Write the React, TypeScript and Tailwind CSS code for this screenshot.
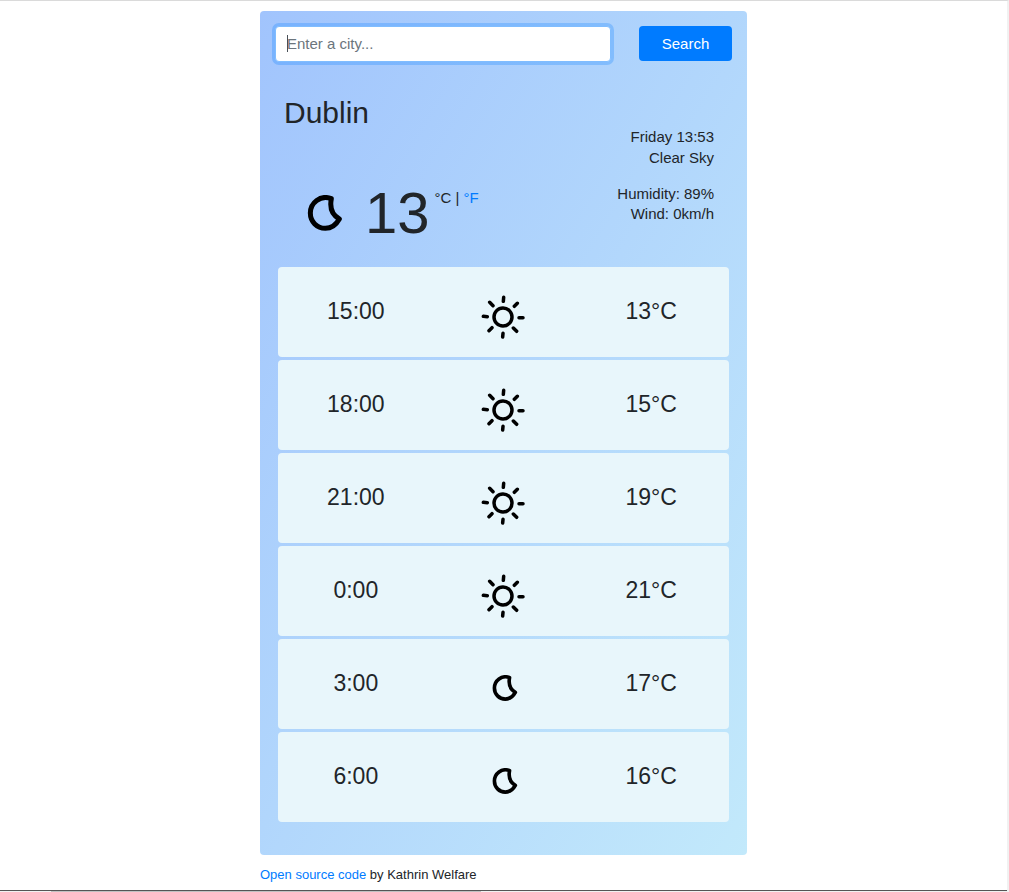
import { useState } from "react";

type Sky = "sun" | "moon";

const forecast: { time: string; sky: Sky; temperature: string }[] = [
  { time: "15:00", sky: "sun", temperature: "13°C" },
  { time: "18:00", sky: "sun", temperature: "15°C" },
  { time: "21:00", sky: "sun", temperature: "19°C" },
  { time: "0:00", sky: "sun", temperature: "21°C" },
  { time: "3:00", sky: "moon", temperature: "17°C" },
  { time: "6:00", sky: "moon", temperature: "16°C" },
];

function SunIcon({ className }: { className: string }) {
  return (
    <svg viewBox="10 13 132 132" className={className} fill="none" stroke="#000" strokeLinecap="round" aria-hidden="true">
      <circle cx="76" cy="79" r="27" strokeWidth="10.5" />
      <path
        strokeWidth="10.5"
        d="M78 20L77 32M124 81H136M17 77L29 78M76 128L75 139M36 35L46 45M119 38L110 47M43 111L34 120M107 112L117 122"
      />
    </svg>
  );
}

function MoonIcon({ className }: { className: string }) {
  return (
    <svg viewBox="20 20 108 108" className={className} fill="none" stroke="#000" strokeLinejoin="round" strokeWidth="15" aria-hidden="true">
      <path d="M93 31C60 18 30 44 30 74C30 100 50 120 75 120C94 120 107 110 117 92C99 82 87 62 93 31Z" />
    </svg>
  );
}

export default function App() {
  const [city, setCity] = useState("");

  return (
    <div className="flex min-h-screen flex-col border-t border-r-2 border-t-[#dadada] border-r-[#f1f1f1] bg-white font-['Liberation_Sans',Arial,sans-serif] text-[15px] text-[#212529]">
      <div className="mx-auto w-full max-w-[487px] grow pt-[10px]">
        <main className="rounded bg-[linear-gradient(120deg,#a1c4fd_0%,#c2e9fb_100%)] px-[15px] pt-[15px] pb-[33px]">
          <form className="flex items-start gap-7" onSubmit={(event) => event.preventDefault()}>
            <div className="relative min-w-0 grow">
              <input
                type="search"
                aria-label="City"
                placeholder="Enter a city..."
                autoFocus
                autoComplete="off"
                value={city}
                onChange={(event) => setCity(event.target.value)}
                className={`block h-9 w-full rounded border border-[#80bdff] bg-white px-[11px] pb-[2px] text-[15px] text-[#495057] ring-3 ring-[#007bff]/25 outline-none placeholder:text-[#6c757d] placeholder:opacity-100 ${city ? "" : "caret-transparent"}`}
              />
              {!city && <span className="pointer-events-none absolute top-[9px] left-3 h-[17px] w-px bg-[#495057]" aria-hidden="true" />}
            </div>
            <button type="submit" className="h-[35px] w-[93px] rounded bg-[#007bff] pt-px text-[15px] text-white">
              Search
            </button>
          </form>

          <section className="flex justify-between px-[9px] pt-8">
            <div>
              <h1 className="text-[30px] leading-[38px]">Dublin</h1>
              <div className="flex pt-[49px] pl-[23px]">
                <MoonIcon className="mt-[14px] h-9 w-9" />
                <div className="ml-[22px] text-[58px] leading-[64px]">13</div>
                <div className="ml-[5px] pt-[7px] leading-5">
                  °C | <a href="#fahrenheit" className="text-[#007bff]">°F</a>
                </div>
              </div>
            </div>
            <div className="pt-8 pr-[9px] text-right leading-[21px]">
              <p>Friday 13:53</p>
              <p>Clear Sky</p>
              <p className="mt-4 leading-5">Humidity: 89%</p>
              <p className="leading-5">Wind: 0km/h</p>
            </div>
          </section>

          <section className="mx-[3px] mt-[22px] flex flex-col gap-[3px]" aria-label="Forecast">
            {forecast.map((entry) => (
              <div key={entry.time} className="grid h-[90px] grid-cols-3 items-center justify-items-center rounded bg-[#e8f6fb] px-1 text-[23px]">
                <span className="pb-[2px]">{entry.time}</span>
                {entry.sky === "sun" ? <SunIcon className="mt-[10px] h-11 w-11" /> : <MoonIcon className="mt-2 ml-1 h-[26px] w-[26px]" />}
                <span className="pb-[2px]">{entry.temperature}</span>
              </div>
            ))}
          </section>
        </main>
        <footer className="pt-[10px] text-[13px] leading-5">
          <a href="#source" className="text-[#007bff]">Open source code</a> by Kathrin Welfare
        </footer>
      </div>
      <div className="h-[2px] border-t border-[#555] bg-[#f1f1f1] pl-[51px]">
        <div className="h-px w-[430px] bg-[#c1c1c1]" />
      </div>
    </div>
  );
}
